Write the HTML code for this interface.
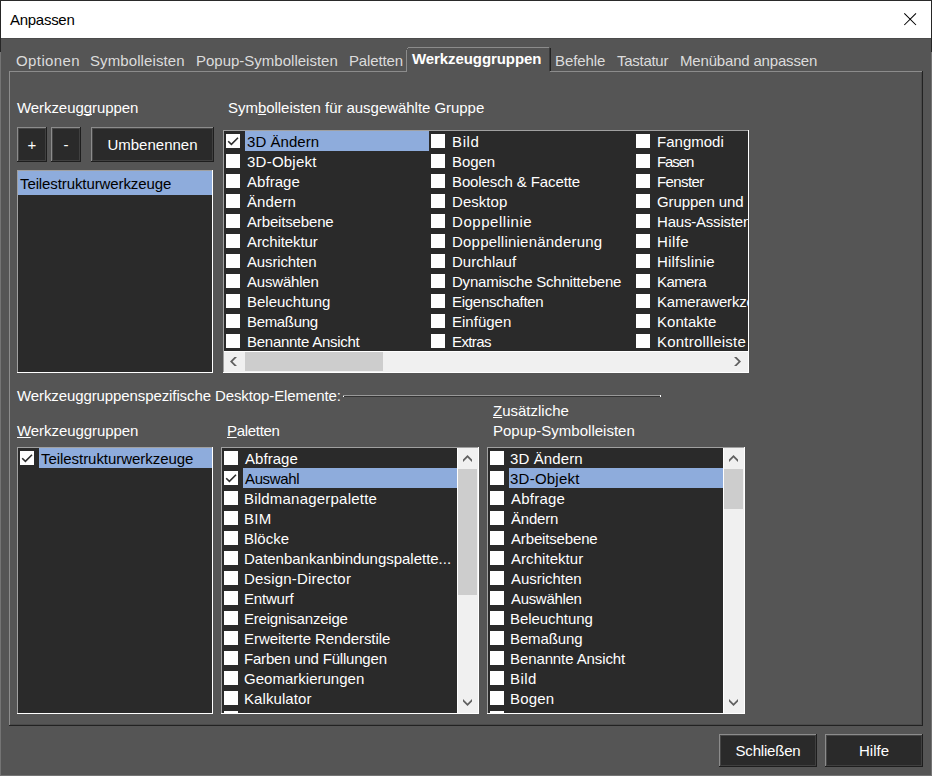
<!DOCTYPE html>
<html><head><meta charset="utf-8"><title>Anpassen</title>
<style>
html,body{margin:0;padding:0;width:932px;height:776px;overflow:hidden;background:#555555;}
body{position:relative;font-family:"Liberation Sans", sans-serif;font-size:15px;}
body div, body svg{position:absolute;}
.t{white-space:nowrap;line-height:20px;font-size:15px;}
u{text-decoration:underline;text-decoration-skip-ink:none;text-underline-offset:1px;}
</style></head><body>
<div style="left:0px;top:0px;width:932px;height:776px;background:#555555"></div>
<div style="left:0px;top:0px;width:932px;height:1px;background:#2a2a2a"></div>
<div style="left:0px;top:1px;width:1px;height:51px;background:#262626"></div>
<div style="left:931px;top:1px;width:1px;height:51px;background:#262626"></div>
<div style="left:0px;top:52px;width:1px;height:724px;background:#747474"></div>
<div style="left:931px;top:52px;width:1px;height:724px;background:#747474"></div>
<div style="left:0px;top:775px;width:932px;height:1px;background:#747474"></div>
<div style="left:1px;top:1px;width:930px;height:37px;background:#fff"></div>
<div style="left:1px;top:38px;width:930px;height:1px;background:#4b4b4b"></div>
<div class="t" style="left:10px;top:10px;color:#000;letter-spacing:-0.28px">Anpassen</div>
<svg style="left:900px;top:9px" width="20" height="20"><path d="M4.3 4.3 L16 16 M16 4.3 L4.3 16" stroke="#000" stroke-width="1.05"/></svg>
<div style="left:9px;top:71px;width:914px;height:1px;background:#8c8c8c"></div>
<div style="left:9px;top:71px;width:1px;height:655px;background:#8c8c8c"></div>
<div style="left:9px;top:725px;width:914px;height:1px;background:#222"></div>
<div style="left:922px;top:71px;width:1px;height:655px;background:#222"></div>
<div style="left:10px;top:724px;width:912px;height:1px;background:#4a4a4a"></div>
<div style="left:921px;top:72px;width:1px;height:653px;background:#4a4a4a"></div>
<div class="t" style="left:16px;top:51px;color:#dcdcdc;letter-spacing:0.4px">Optionen</div>
<div class="t" style="left:90px;top:51px;color:#dcdcdc;letter-spacing:0.1px">Symbolleisten</div>
<div class="t" style="left:196px;top:51px;color:#dcdcdc;letter-spacing:0.0px">Popup-Symbolleisten</div>
<div class="t" style="left:349px;top:51px;color:#dcdcdc;letter-spacing:-0.15px">Paletten</div>
<div class="t" style="left:555px;top:51px;color:#dcdcdc;letter-spacing:-0.1px">Befehle</div>
<div class="t" style="left:617px;top:51px;color:#dcdcdc;letter-spacing:-0.28px">Tastatur</div>
<div class="t" style="left:680px;top:51px;color:#dcdcdc;letter-spacing:-0.18px">Menüband anpassen</div>
<div style="left:407px;top:48px;width:143px;height:24px;background:#555555"></div>
<div style="left:409px;top:47px;width:140px;height:1px;background:#8c8c8c"></div>
<div style="left:406px;top:50px;width:1px;height:22px;background:#8c8c8c"></div>
<div style="left:407px;top:48px;width:1px;height:1px;background:#8c8c8c"></div>
<div style="left:408px;top:47px;width:1px;height:1px;background:#8c8c8c"></div>
<div style="left:550px;top:48px;width:1px;height:23px;background:#222"></div>
<div style="left:549px;top:48px;width:1px;height:23px;background:#3a3a3a"></div>
<div style="left:407px;top:71px;width:142px;height:1px;background:#555555"></div>
<div class="t" style="left:412px;top:49px;color:#fff;font-weight:bold;letter-spacing:-0.08px">Werkzeuggruppen</div>
<div class="t" style="left:17px;top:98px;color:#fff;letter-spacing:-0.07px">Werkzeug<u>g</u>ruppen</div>
<div class="t" style="left:228px;top:98px;color:#fff;letter-spacing:-0.04px">Sym<u>b</u>olleisten für ausgewählte Gruppe</div>
<div style="left:17px;top:127px;width:30px;height:35px;background:#2a2a2a"></div>
<div style="left:17px;top:127px;width:30px;height:1px;background:#8c8c8c"></div>
<div style="left:17px;top:127px;width:1px;height:35px;background:#8c8c8c"></div>
<div style="left:18px;top:128px;width:28px;height:1px;background:#464646"></div>
<div style="left:18px;top:128px;width:1px;height:33px;background:#464646"></div>
<div style="left:17px;top:161px;width:30px;height:1px;background:#1e1e1e"></div>
<div style="left:46px;top:127px;width:1px;height:35px;background:#1e1e1e"></div>
<div style="left:18px;top:160px;width:28px;height:1px;background:#404040"></div>
<div style="left:45px;top:128px;width:1px;height:33px;background:#404040"></div>
<div class="t" style="left:17px;width:30px;top:135px;text-align:center;color:#fff;">+</div>
<div style="left:51px;top:127px;width:30px;height:35px;background:#2a2a2a"></div>
<div style="left:51px;top:127px;width:30px;height:1px;background:#8c8c8c"></div>
<div style="left:51px;top:127px;width:1px;height:35px;background:#8c8c8c"></div>
<div style="left:52px;top:128px;width:28px;height:1px;background:#464646"></div>
<div style="left:52px;top:128px;width:1px;height:33px;background:#464646"></div>
<div style="left:51px;top:161px;width:30px;height:1px;background:#1e1e1e"></div>
<div style="left:80px;top:127px;width:1px;height:35px;background:#1e1e1e"></div>
<div style="left:52px;top:160px;width:28px;height:1px;background:#404040"></div>
<div style="left:79px;top:128px;width:1px;height:33px;background:#404040"></div>
<div class="t" style="left:51px;width:30px;top:135px;text-align:center;color:#fff;">-</div>
<div style="left:91px;top:127px;width:123px;height:35px;background:#2a2a2a"></div>
<div style="left:91px;top:127px;width:123px;height:1px;background:#8c8c8c"></div>
<div style="left:91px;top:127px;width:1px;height:35px;background:#8c8c8c"></div>
<div style="left:92px;top:128px;width:121px;height:1px;background:#464646"></div>
<div style="left:92px;top:128px;width:1px;height:33px;background:#464646"></div>
<div style="left:91px;top:161px;width:123px;height:1px;background:#1e1e1e"></div>
<div style="left:213px;top:127px;width:1px;height:35px;background:#1e1e1e"></div>
<div style="left:92px;top:160px;width:121px;height:1px;background:#404040"></div>
<div style="left:212px;top:128px;width:1px;height:33px;background:#404040"></div>
<div class="t" style="left:91px;width:123px;top:135px;text-align:center;color:#fff;">Umbenennen</div>
<div style="left:17px;top:170px;width:196px;height:203px;background:#2a2a2a"></div>
<div style="left:17px;top:170px;width:196px;height:1px;background:#a0a0a0"></div>
<div style="left:17px;top:170px;width:1px;height:203px;background:#a0a0a0"></div>
<div style="left:17px;top:372px;width:196px;height:1px;background:#ffffff"></div>
<div style="left:212px;top:170px;width:1px;height:203px;background:#ffffff"></div>
<div style="left:18px;top:171px;width:194px;height:24px;background:#8eacdc"></div>
<div class="t" style="left:20px;top:174px;color:#000;letter-spacing:-0.1px">Teilestrukturwerkzeuge</div>
<div style="left:223px;top:130px;width:526px;height:243px;background:#2a2a2a"></div>
<div style="left:223px;top:130px;width:526px;height:1px;background:#a0a0a0"></div>
<div style="left:223px;top:130px;width:1px;height:243px;background:#a0a0a0"></div>
<div style="left:223px;top:372px;width:526px;height:1px;background:#ffffff"></div>
<div style="left:748px;top:130px;width:1px;height:243px;background:#ffffff"></div>
<div style="left:226px;top:134px;width:14px;height:14px;background:#fff"><svg width="14" height="14" style="position:absolute;left:0;top:0"><path d="M2.2 7.2 L5.4 10.3 L12 3.8" fill="none" stroke="#2e2e2e" stroke-width="1.6"/></svg></div>
<div style="left:245px;top:131px;width:184px;height:20px;background:#8eacdc"></div>
<div class="t" style="left:247px;top:132px;color:#000;letter-spacing:0.050px;">3D Ändern</div>
<div style="left:226px;top:154px;width:14px;height:14px;background:#fff"></div>
<div class="t" style="left:247px;top:152px;color:#fff;letter-spacing:0.238px;">3D-Objekt</div>
<div style="left:226px;top:174px;width:14px;height:14px;background:#fff"></div>
<div class="t" style="left:247px;top:172px;color:#fff;letter-spacing:0.050px;">Abfrage</div>
<div style="left:226px;top:194px;width:14px;height:14px;background:#fff"></div>
<div class="t" style="left:247px;top:192px;color:#fff;letter-spacing:0.100px;">Ändern</div>
<div style="left:226px;top:214px;width:14px;height:14px;background:#fff"></div>
<div class="t" style="left:247px;top:212px;color:#fff;letter-spacing:-0.155px;">Arbeitsebene</div>
<div style="left:226px;top:234px;width:14px;height:14px;background:#fff"></div>
<div class="t" style="left:247px;top:232px;color:#fff;letter-spacing:-0.100px;">Architektur</div>
<div style="left:226px;top:254px;width:14px;height:14px;background:#fff"></div>
<div class="t" style="left:247px;top:252px;color:#fff;letter-spacing:-0.144px;">Ausrichten</div>
<div style="left:226px;top:274px;width:14px;height:14px;background:#fff"></div>
<div class="t" style="left:247px;top:272px;color:#fff;letter-spacing:-0.200px;">Auswählen</div>
<div style="left:226px;top:294px;width:14px;height:14px;background:#fff"></div>
<div class="t" style="left:247px;top:292px;color:#fff;letter-spacing:0.000px;">Beleuchtung</div>
<div style="left:226px;top:314px;width:14px;height:14px;background:#fff"></div>
<div class="t" style="left:247px;top:312px;color:#fff;letter-spacing:-0.343px;">Bemaßung</div>
<div style="left:226px;top:334px;width:14px;height:14px;background:#fff"></div>
<div class="t" style="left:247px;top:332px;color:#fff;letter-spacing:-0.267px;">Benannte Ansicht</div>
<div style="left:431px;top:134px;width:14px;height:14px;background:#fff"></div>
<div class="t" style="left:452px;top:132px;color:#fff;letter-spacing:0.633px;">Bild</div>
<div style="left:431px;top:154px;width:14px;height:14px;background:#fff"></div>
<div class="t" style="left:452px;top:152px;color:#fff;letter-spacing:-0.075px;">Bogen</div>
<div style="left:431px;top:174px;width:14px;height:14px;background:#fff"></div>
<div class="t" style="left:452px;top:172px;color:#fff;letter-spacing:-0.112px;">Boolesch &amp; Facette</div>
<div style="left:431px;top:194px;width:14px;height:14px;background:#fff"></div>
<div class="t" style="left:452px;top:192px;color:#fff;letter-spacing:0.050px;">Desktop</div>
<div style="left:431px;top:214px;width:14px;height:14px;background:#fff"></div>
<div class="t" style="left:452px;top:212px;color:#fff;letter-spacing:0.550px;">Doppellinie</div>
<div style="left:431px;top:234px;width:14px;height:14px;background:#fff"></div>
<div class="t" style="left:452px;top:232px;color:#fff;letter-spacing:0.221px;">Doppellinienänderung</div>
<div style="left:431px;top:254px;width:14px;height:14px;background:#fff"></div>
<div class="t" style="left:452px;top:252px;color:#fff;letter-spacing:-0.012px;">Durchlauf</div>
<div style="left:431px;top:274px;width:14px;height:14px;background:#fff"></div>
<div class="t" style="left:452px;top:272px;color:#fff;letter-spacing:-0.223px;">Dynamische Schnittebene</div>
<div style="left:431px;top:294px;width:14px;height:14px;background:#fff"></div>
<div class="t" style="left:452px;top:292px;color:#fff;letter-spacing:-0.283px;">Eigenschaften</div>
<div style="left:431px;top:314px;width:14px;height:14px;background:#fff"></div>
<div class="t" style="left:452px;top:312px;color:#fff;letter-spacing:0.014px;">Einfügen</div>
<div style="left:431px;top:334px;width:14px;height:14px;background:#fff"></div>
<div class="t" style="left:452px;top:332px;color:#fff;letter-spacing:-0.600px;">Extras</div>
<div style="left:636px;top:134px;width:14px;height:14px;background:#fff"></div>
<div class="t" style="left:657px;top:132px;color:#fff;width:91px;overflow:hidden;letter-spacing:0.014px;">Fangmodi</div>
<div style="left:636px;top:154px;width:14px;height:14px;background:#fff"></div>
<div class="t" style="left:657px;top:152px;color:#fff;width:91px;overflow:hidden;letter-spacing:-1.075px;">Fasen</div>
<div style="left:636px;top:174px;width:14px;height:14px;background:#fff"></div>
<div class="t" style="left:657px;top:172px;color:#fff;width:91px;overflow:hidden;letter-spacing:-0.617px;">Fenster</div>
<div style="left:636px;top:194px;width:14px;height:14px;background:#fff"></div>
<div class="t" style="left:657px;top:192px;color:#fff;width:91px;overflow:hidden;letter-spacing:-0.100px;">Gruppen und</div>
<div style="left:636px;top:214px;width:14px;height:14px;background:#fff"></div>
<div class="t" style="left:657px;top:212px;color:#fff;width:91px;overflow:hidden;letter-spacing:-0.2px;">Haus-Assistent</div>
<div style="left:636px;top:234px;width:14px;height:14px;background:#fff"></div>
<div class="t" style="left:657px;top:232px;color:#fff;width:91px;overflow:hidden;letter-spacing:0.425px;">Hilfe</div>
<div style="left:636px;top:254px;width:14px;height:14px;background:#fff"></div>
<div class="t" style="left:657px;top:252px;color:#fff;width:91px;overflow:hidden;letter-spacing:0.189px;">Hilfslinie</div>
<div style="left:636px;top:274px;width:14px;height:14px;background:#fff"></div>
<div class="t" style="left:657px;top:272px;color:#fff;width:91px;overflow:hidden;letter-spacing:-0.600px;">Kamera</div>
<div style="left:636px;top:294px;width:14px;height:14px;background:#fff"></div>
<div class="t" style="left:657px;top:292px;color:#fff;width:91px;overflow:hidden;letter-spacing:-0.2px;">Kamerawerkzeuge</div>
<div style="left:636px;top:314px;width:14px;height:14px;background:#fff"></div>
<div class="t" style="left:657px;top:312px;color:#fff;width:91px;overflow:hidden;letter-spacing:0.014px;">Kontakte</div>
<div style="left:636px;top:334px;width:14px;height:14px;background:#fff"></div>
<div class="t" style="left:657px;top:332px;color:#fff;width:91px;overflow:hidden;letter-spacing:0.223px;">Kontrollleiste</div>
<div style="left:224px;top:351px;width:524px;height:21px;background:#f0f0f0"></div>
<div style="left:224px;top:351px;width:524px;height:1px;background:#ffffff"></div>
<div style="left:245px;top:352px;width:138px;height:19px;background:#cdcdcd"></div>
<svg style="left:0;top:0" width="932" height="776"><path d="M237 357 L232.5 361.5 L237 366 L234.5 366 L230 361.5 L234.5 357 Z M734 357 L738.5 361.5 L734 366 L736.5 366 L741 361.5 L736.5 357 Z" fill="#606060"/></svg>
<div class="t" style="left:17px;top:386px;color:#fff;letter-spacing:-0.1px">Werkzeuggruppenspezifische Desktop-Elemente:</div>
<div style="left:343px;top:395px;width:318px;height:1px;background:#9a9a9a"></div>
<div style="left:343px;top:396px;width:318px;height:1px;background:#333"></div>
<div style="left:343px;top:396px;width:1px;height:1px;background:#fff"></div>
<div style="left:660px;top:395px;width:1px;height:2px;background:#fff"></div>
<div class="t" style="left:17px;top:421px;color:#fff;letter-spacing:-0.07px"><u>W</u>erkzeuggruppen</div>
<div class="t" style="left:227px;top:421px;color:#fff;letter-spacing:-0.3px"><u>P</u>aletten</div>
<div class="t" style="left:493px;top:401px;color:#fff;"><u>Z</u>usätzliche</div>
<div class="t" style="left:493px;top:421px;color:#fff;">Popup-Symbolleisten</div>
<div style="left:17px;top:447px;width:196px;height:267px;background:#2a2a2a"></div>
<div style="left:17px;top:447px;width:196px;height:1px;background:#a0a0a0"></div>
<div style="left:17px;top:447px;width:1px;height:267px;background:#a0a0a0"></div>
<div style="left:17px;top:713px;width:196px;height:1px;background:#ffffff"></div>
<div style="left:212px;top:447px;width:1px;height:267px;background:#ffffff"></div>
<div style="left:20px;top:451px;width:14px;height:14px;background:#fff"><svg width="14" height="14" style="position:absolute;left:0;top:0"><path d="M2.2 7.2 L5.4 10.3 L12 3.8" fill="none" stroke="#2e2e2e" stroke-width="1.6"/></svg></div>
<div style="left:39px;top:448px;width:173px;height:20px;background:#8eacdc"></div>
<div class="t" style="left:41px;top:449px;color:#000;letter-spacing:-0.05px;">Teilestrukturwerkzeuge</div>
<div style="left:221px;top:447px;width:258px;height:267px;background:#2a2a2a"></div>
<div style="left:221px;top:447px;width:258px;height:1px;background:#a0a0a0"></div>
<div style="left:221px;top:447px;width:1px;height:267px;background:#a0a0a0"></div>
<div style="left:221px;top:713px;width:258px;height:1px;background:#ffffff"></div>
<div style="left:478px;top:447px;width:1px;height:267px;background:#ffffff"></div>
<div style="left:224px;top:451px;width:14px;height:14px;background:#fff"></div>
<div class="t" style="left:245px;top:449px;color:#fff;letter-spacing:0.050px;">Abfrage</div>
<div style="left:224px;top:471px;width:14px;height:14px;background:#fff"><svg width="14" height="14" style="position:absolute;left:0;top:0"><path d="M2.2 7.2 L5.4 10.3 L12 3.8" fill="none" stroke="#2e2e2e" stroke-width="1.6"/></svg></div>
<div style="left:243px;top:468px;width:214px;height:20px;background:#8eacdc"></div>
<div class="t" style="left:245px;top:469px;color:#000;letter-spacing:-0.367px;">Auswahl</div>
<div style="left:224px;top:491px;width:14px;height:14px;background:#fff"></div>
<div class="t" style="left:244px;top:489px;color:#fff;letter-spacing:0.212px;">Bildmanagerpalette</div>
<div style="left:224px;top:511px;width:14px;height:14px;background:#fff"></div>
<div class="t" style="left:244px;top:509px;color:#fff;letter-spacing:0.300px;">BIM</div>
<div style="left:224px;top:531px;width:14px;height:14px;background:#fff"></div>
<div class="t" style="left:244px;top:529px;color:#fff;letter-spacing:-0.000px;">Blöcke</div>
<div style="left:224px;top:551px;width:14px;height:14px;background:#fff"></div>
<div class="t" style="left:244px;top:549px;color:#fff;letter-spacing:-0.021px;">Datenbankanbindungspalette...</div>
<div style="left:224px;top:571px;width:14px;height:14px;background:#fff"></div>
<div class="t" style="left:244px;top:569px;color:#fff;letter-spacing:0.193px;">Design-Director</div>
<div style="left:224px;top:591px;width:14px;height:14px;background:#fff"></div>
<div class="t" style="left:244px;top:589px;color:#fff;letter-spacing:-0.200px;">Entwurf</div>
<div style="left:224px;top:611px;width:14px;height:14px;background:#fff"></div>
<div class="t" style="left:244px;top:609px;color:#fff;letter-spacing:-0.200px;">Ereignisanzeige</div>
<div style="left:224px;top:631px;width:14px;height:14px;background:#fff"></div>
<div class="t" style="left:244px;top:629px;color:#fff;letter-spacing:-0.057px;">Erweiterte Renderstile</div>
<div style="left:224px;top:651px;width:14px;height:14px;background:#fff"></div>
<div class="t" style="left:244px;top:649px;color:#fff;letter-spacing:-0.200px;">Farben und Füllungen</div>
<div style="left:224px;top:671px;width:14px;height:14px;background:#fff"></div>
<div class="t" style="left:244px;top:669px;color:#fff;letter-spacing:0.014px;">Geomarkierungen</div>
<div style="left:224px;top:691px;width:14px;height:14px;background:#fff"></div>
<div class="t" style="left:244px;top:689px;color:#fff;letter-spacing:0.078px;">Kalkulator</div>
<div style="left:224px;top:711px;width:14px;height:2px;background:#fff"></div>
<div style="left:458px;top:448px;width:20px;height:265px;background:#f0f0f0"></div>
<div style="left:457px;top:448px;width:1px;height:265px;background:#fff"></div>
<div style="left:458px;top:469px;width:19px;height:126px;background:#cdcdcd"></div>
<svg style="left:0;top:0" width="932" height="776"><path d="M463 459.5 L467.5 455 L472 459.5 L472 462 L467.5 457.5 L463 462 Z M463 699 L467.5 703.5 L472 699 L472 701.5 L467.5 706 L463 701.5 Z" fill="#606060"/></svg>
<div style="left:487px;top:447px;width:258px;height:267px;background:#2a2a2a"></div>
<div style="left:487px;top:447px;width:258px;height:1px;background:#a0a0a0"></div>
<div style="left:487px;top:447px;width:1px;height:267px;background:#a0a0a0"></div>
<div style="left:487px;top:713px;width:258px;height:1px;background:#ffffff"></div>
<div style="left:744px;top:447px;width:1px;height:267px;background:#ffffff"></div>
<div style="left:490px;top:451px;width:14px;height:14px;background:#fff"></div>
<div class="t" style="left:510px;top:449px;color:#fff;letter-spacing:0.113px;">3D Ändern</div>
<div style="left:490px;top:471px;width:14px;height:14px;background:#fff"></div>
<div style="left:509px;top:468px;width:214px;height:20px;background:#8eacdc"></div>
<div class="t" style="left:510px;top:469px;color:#000;letter-spacing:0.238px;">3D-Objekt</div>
<div style="left:490px;top:491px;width:14px;height:14px;background:#fff"></div>
<div class="t" style="left:511px;top:489px;color:#fff;letter-spacing:0.217px;">Abfrage</div>
<div style="left:490px;top:511px;width:14px;height:14px;background:#fff"></div>
<div class="t" style="left:511px;top:509px;color:#fff;letter-spacing:-0.200px;">Ändern</div>
<div style="left:490px;top:531px;width:14px;height:14px;background:#fff"></div>
<div class="t" style="left:511px;top:529px;color:#fff;letter-spacing:-0.155px;">Arbeitsebene</div>
<div style="left:490px;top:551px;width:14px;height:14px;background:#fff"></div>
<div class="t" style="left:511px;top:549px;color:#fff;letter-spacing:0.050px;">Architektur</div>
<div style="left:490px;top:571px;width:14px;height:14px;background:#fff"></div>
<div class="t" style="left:511px;top:569px;color:#fff;letter-spacing:-0.033px;">Ausrichten</div>
<div style="left:490px;top:591px;width:14px;height:14px;background:#fff"></div>
<div class="t" style="left:511px;top:589px;color:#fff;letter-spacing:-0.325px;">Auswählen</div>
<div style="left:490px;top:611px;width:14px;height:14px;background:#fff"></div>
<div class="t" style="left:510px;top:609px;color:#fff;letter-spacing:-0.050px;">Beleuchtung</div>
<div style="left:490px;top:631px;width:14px;height:14px;background:#fff"></div>
<div class="t" style="left:510px;top:629px;color:#fff;letter-spacing:-0.129px;">Bemaßung</div>
<div style="left:490px;top:651px;width:14px;height:14px;background:#fff"></div>
<div class="t" style="left:510px;top:649px;color:#fff;letter-spacing:-0.100px;">Benannte Ansicht</div>
<div style="left:490px;top:671px;width:14px;height:14px;background:#fff"></div>
<div class="t" style="left:510px;top:669px;color:#fff;letter-spacing:0.467px;">Bild</div>
<div style="left:490px;top:691px;width:14px;height:14px;background:#fff"></div>
<div class="t" style="left:510px;top:689px;color:#fff;letter-spacing:0.175px;">Bogen</div>
<div style="left:490px;top:711px;width:14px;height:2px;background:#fff"></div>
<div style="left:724px;top:448px;width:20px;height:265px;background:#f0f0f0"></div>
<div style="left:723px;top:448px;width:1px;height:265px;background:#fff"></div>
<div style="left:724px;top:469px;width:19px;height:40px;background:#cdcdcd"></div>
<svg style="left:0;top:0" width="932" height="776"><path d="M729 459.5 L733.5 455 L738 459.5 L738 462 L733.5 457.5 L729 462 Z M729 699 L733.5 703.5 L738 699 L738 701.5 L733.5 706 L729 701.5 Z" fill="#606060"/></svg>
<div style="left:719px;top:734px;width:98px;height:33px;background:#2a2a2a"></div>
<div style="left:719px;top:734px;width:98px;height:1px;background:#8c8c8c"></div>
<div style="left:719px;top:734px;width:1px;height:33px;background:#8c8c8c"></div>
<div style="left:720px;top:735px;width:96px;height:1px;background:#464646"></div>
<div style="left:720px;top:735px;width:1px;height:31px;background:#464646"></div>
<div style="left:719px;top:766px;width:98px;height:1px;background:#1e1e1e"></div>
<div style="left:816px;top:734px;width:1px;height:33px;background:#1e1e1e"></div>
<div style="left:720px;top:765px;width:96px;height:1px;background:#404040"></div>
<div style="left:815px;top:735px;width:1px;height:31px;background:#404040"></div>
<div class="t" style="left:719px;width:98px;top:741px;text-align:center;color:#fff;letter-spacing:-0.2px;">Schließen</div>
<div style="left:825px;top:734px;width:98px;height:33px;background:#2a2a2a"></div>
<div style="left:825px;top:734px;width:98px;height:1px;background:#8c8c8c"></div>
<div style="left:825px;top:734px;width:1px;height:33px;background:#8c8c8c"></div>
<div style="left:826px;top:735px;width:96px;height:1px;background:#464646"></div>
<div style="left:826px;top:735px;width:1px;height:31px;background:#464646"></div>
<div style="left:825px;top:766px;width:98px;height:1px;background:#1e1e1e"></div>
<div style="left:922px;top:734px;width:1px;height:33px;background:#1e1e1e"></div>
<div style="left:826px;top:765px;width:96px;height:1px;background:#404040"></div>
<div style="left:921px;top:735px;width:1px;height:31px;background:#404040"></div>
<div class="t" style="left:825px;width:98px;top:741px;text-align:center;color:#fff;">Hilfe</div>
</body></html>
